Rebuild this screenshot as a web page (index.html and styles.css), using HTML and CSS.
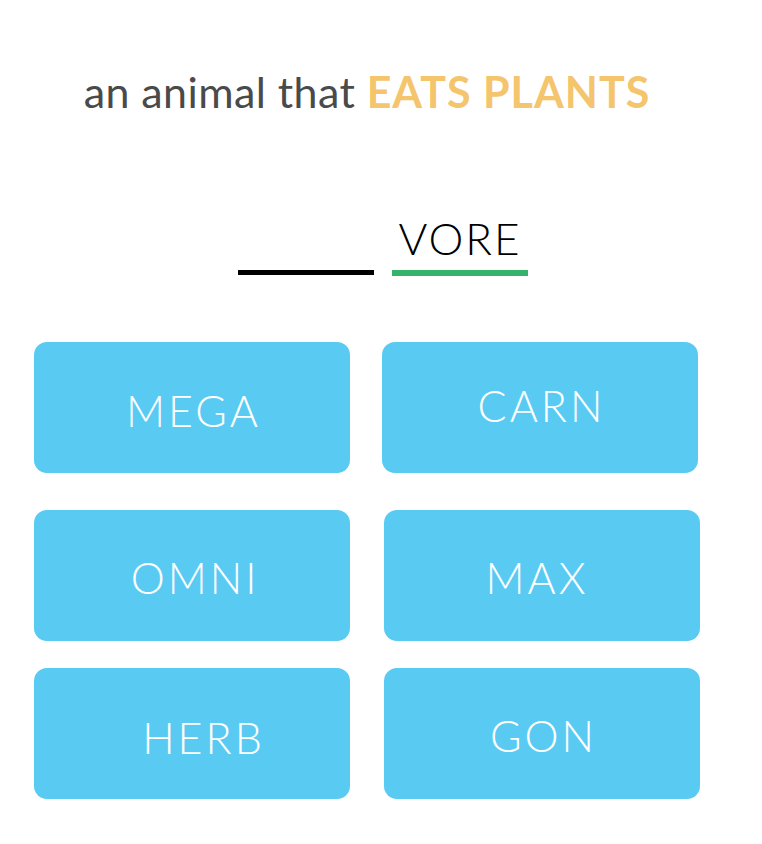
FILE: index.html
```html
<!DOCTYPE html>
<html>
<head>
<meta charset="utf-8">
<link rel="stylesheet" href="styles.css">
</head>
<body>
<main class="page">
  <h1 class="prompt">an animal that <span class="prompt-key">EATS PLANTS</span></h1>
  <div class="answer">
    <div class="slot slot-empty"></div>
    <div class="slot slot-filled">VORE</div>
  </div>
  <div class="choices">
    <div class="choice-row row-1">
      <button class="choice choice-mega">MEGA</button>
      <button class="choice choice-carn">CARN</button>
    </div>
    <div class="choice-row row-2">
      <button class="choice choice-omni">OMNI</button>
      <button class="choice choice-max">MAX</button>
    </div>
    <div class="choice-row row-3">
      <button class="choice choice-herb">HERB</button>
      <button class="choice choice-gon">GON</button>
    </div>
  </div>
</main>
</body>
</html>
```
FILE: styles.css
```css
html, body {
  margin: 0;
  padding: 0;
  background: #ffffff;
}
.page {
  width: 666px;
  margin-left: 34px;
  padding-top: 62px;
  font-family: Lato, "Open Sans", sans-serif;
}
.prompt {
  margin: 0;
  text-align: center;
  font-size: 43px;
  font-weight: 400;
  color: #4a4a4a;
  line-height: 60px;
  letter-spacing: 0.4px;
}
.prompt-key {
  font-weight: 700;
  color: #f4c56c;
  letter-spacing: 1px;
}
.answer {
  display: flex;
  justify-content: center;
  align-items: flex-end;
  gap: 18px;
  margin-top: 94px;
  padding-left: 32px;
}
.slot {
  width: 136px;
  text-align: center;
}
.slot-empty {
  height: 0;
  border-bottom: 5px solid #000000;
  margin-bottom: 1px;
}
.slot-filled {
  font-size: 44px;
  font-weight: 300;
  color: #000000;
  line-height: 44px;
  letter-spacing: 2px;
  padding-bottom: 10px;
  border-bottom: 6px solid #35b36c;
}
.choices {
  margin-top: 66px;
  display: flex;
  flex-direction: column;
}
.choice-row {
  display: flex;
  gap: 32px;
}
.row-2 {
  margin-top: 37px;
  gap: 34px;
}
.row-3 {
  margin-top: 27px;
  gap: 34px;
}
.choice {
  width: 316px;
  height: 131px;
  border: none;
  border-radius: 13px;
  background: #59cbf3;
  color: #ffffff;
  font-family: Lato, "Open Sans", sans-serif;
  font-size: 43px;
  font-weight: 300;
  letter-spacing: 3px;
  padding: 0;
  display: flex;
  align-items: center;
  justify-content: center;
}
.choice-mega { padding-top: 5px; padding-left: 3px; }
.choice-carn { padding-bottom: 4px; padding-left: 3px; }
.choice-omni { padding-top: 3px; padding-left: 6px; }
.choice-max { padding-top: 4px; padding-right: 10px; }
.choice-herb { padding-top: 7px; padding-left: 23px; }
.choice-gon { padding-top: 3px; padding-left: 3px; }
```
